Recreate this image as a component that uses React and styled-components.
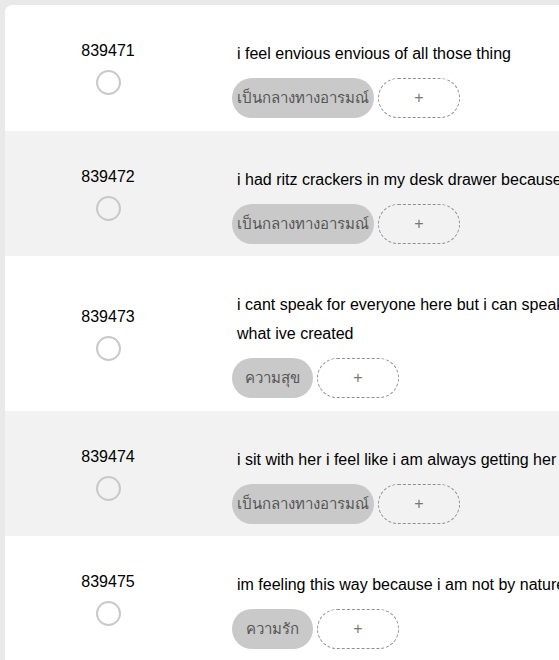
import React from 'react'
import styled, { createGlobalStyle } from 'styled-components'

const GlobalStyle = createGlobalStyle`
html, body {
  margin : 0;
  padding : 0;
  overflow : hidden;
  background : #e9e9e9;
}
body {
  font-family : "Liberation Sans", Arial, sans-serif;
}
`

const Page = styled.div`
padding : 5px 0 0 5px;
`
const Card = styled.div`
width : 1000px;
background : #ffffff;
border-radius : 8px 0 0 0;
overflow : hidden;
`
const Row = styled.div`
display : grid;
grid-template-columns : 206px 1fr;
column-gap : 21px;
padding : 33px 0 12.5px;
background : ${(props) => (props.shaded ? '#f2f2f2' : '#ffffff')};
`
const IdCell = styled.div`
display : flex;
flex-direction : column;
align-items : center;
justify-content : center;
gap : 8px;
margin-top : -33px;
margin-bottom : -12.5px;
`
const IdText = styled.div`
font-size : 16px;
line-height : 22px;
color : #000;
`
const Circle = styled.span`
width : 21px;
height : 21px;
border : 2px solid #c9c9c9;
border-radius : 50%;
`
const Body = styled.div`
display : flex;
flex-direction : column;
`
const Sentence = styled.p`
margin : 0;
padding : 1px 0 0 5px;
max-width : 550px;
font-size : 16px;
line-height : 29px;
color : #000;
`
const Tags = styled.div`
display : flex;
gap : 4px;
margin-top : 10px;
`
const Tag = styled.span`
box-sizing : border-box;
height : 40px;
min-width : 81px;
padding : 0 5px;
border-radius : 20px;
display : flex;
align-items : center;
justify-content : center;
font-size : 15px;
background : #c9c9c9;
color : #555;
`
const AddTag = styled.span`
box-sizing : border-box;
height : 40px;
width : 82px;
border-radius : 20px;
border : 1px dashed #8f8f8f;
display : flex;
align-items : center;
justify-content : center;
font-size : 16px;
color : #777;
cursor : pointer;
`

const items = [
  { id : 839471, text : 'i feel envious envious of all those thing', tag : 'เป็นกลางทางอารมณ์' },
  { id : 839472, text : 'i had ritz crackers in my desk drawer because i was feeling hungry', tag : 'เป็นกลางทางอารมณ์' },
  { id : 839473, text : 'i cant speak for everyone here but i can speak for myself and i am proud of what ive created', tag : 'ความสุข' },
  { id : 839474, text : 'i sit with her i feel like i am always getting her attention', tag : 'เป็นกลางทางอารมณ์' },
  { id : 839475, text : 'im feeling this way because i am not by nature a loving person', tag : 'ความรัก' },
]

function App() {
  return (
    <Page>
      <GlobalStyle />
      <Card>
        {items.map((item, i) => (
          <Row key={item.id} shaded={i % 2 === 1}>
            <IdCell>
              <IdText>{item.id}</IdText>
              <Circle />
            </IdCell>
            <Body>
              <Sentence>{item.text}</Sentence>
              <Tags>
                <Tag>{item.tag}</Tag>
                <AddTag>+</AddTag>
              </Tags>
            </Body>
          </Row>
        ))}
      </Card>
    </Page>
  )
}

export default App
